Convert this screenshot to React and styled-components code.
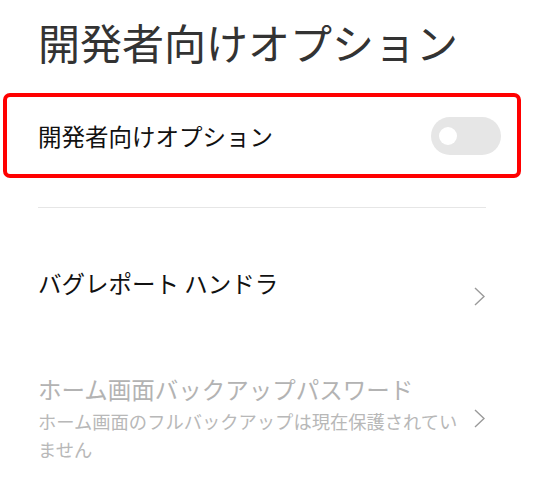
import styled, { createGlobalStyle } from 'styled-components';

const GlobalStyle = createGlobalStyle`
  html, body {
    margin: 0;
    padding: 0;
    background: #ffffff;
  }
  body {
    font-family: "Noto Sans CJK JP", "Noto Sans", sans-serif;
  }
`;

const Chevron = () => (
  <svg width="11" height="19" viewBox="0 0 11 19" fill="none">
    <path d="M1 1 L10 9.5 L1 18" stroke="#9a9a9a" strokeWidth="1.4" />
  </svg>
);

const App = () => {
  return (
    <Page>
      <GlobalStyle />
      <Title>開発者向けオプション</Title>

      <ToggleRow highlighted>
        <RowLabel>開発者向けオプション</RowLabel>
        <Switch>
          <Knob />
        </Switch>
      </ToggleRow>

      <Divider />

      <LinkRow>
        <TextBlock>
          <RowLabel spacer>バグレポート ハンドラ</RowLabel>
        </TextBlock>
        <Chevron />
      </LinkRow>

      <LinkRow disabled>
        <TextBlock>
          <RowLabel disabled>ホーム画面バックアップパスワード</RowLabel>
          <Summary>ホーム画面のフルバックアップは現在保護されていません</Summary>
        </TextBlock>
        <Chevron />
      </LinkRow>
    </Page>
  );
};

export default App;

const Page = styled.div`
  width: 540px;
  height: 490px;
  overflow: hidden;
  background: #ffffff;
`;

const Title = styled.h1`
  margin: 0;
  padding: 17px 0 0 38px;
  height: 76px;
  box-sizing: border-box;
  font-size: 42px;
  line-height: 50px;
  font-weight: 400;
  color: #333333;
`;

const ToggleRow = styled.div`
  display: flex;
  align-items: center;
  justify-content: space-between;
  box-sizing: border-box;
  margin: 17px 0 0 3px;
  width: 518px;
  height: 85px;
  padding: 0 16px 0 31px;
  border: 4px solid ${p => (p.highlighted ? '#ff0000' : 'transparent')};
  border-radius: 7px;
`;

const RowLabel = styled.div`
  font-size: 23.5px;
  line-height: 30px;
  white-space: nowrap;
  color: ${p => (p.disabled ? '#b3b3b3' : '#111111')};
  padding-bottom: ${p => (p.spacer ? '26px' : '0')};
`;

const Switch = styled.div`
  display: flex;
  align-items: center;
  width: 70px;
  height: 38px;
  border-radius: 19px;
  background: #e6e6e6;
  padding-left: 8px;
  box-sizing: border-box;
`;

const Knob = styled.div`
  width: 18px;
  height: 18px;
  border-radius: 50%;
  background: #ffffff;
`;

const Divider = styled.div`
  margin: 29px 0 0 38px;
  width: 448px;
  height: 1px;
  background: #e6e6e6;
`;

const LinkRow = styled.div`
  display: flex;
  align-items: center;
  gap: 6px;
  padding: 0 55px 0 38px;
  height: ${p => (p.disabled ? '116px' : '128px')};
  margin-top: ${p => (p.disabled ? '0' : '24px')};
`;

const TextBlock = styled.div`
  flex: 1;
  min-width: 0;
`;

const Summary = styled.div`
  margin-top: 3px;
  font-size: 18.3px;
  line-height: 28px;
  color: #b8b8b8;
`;
